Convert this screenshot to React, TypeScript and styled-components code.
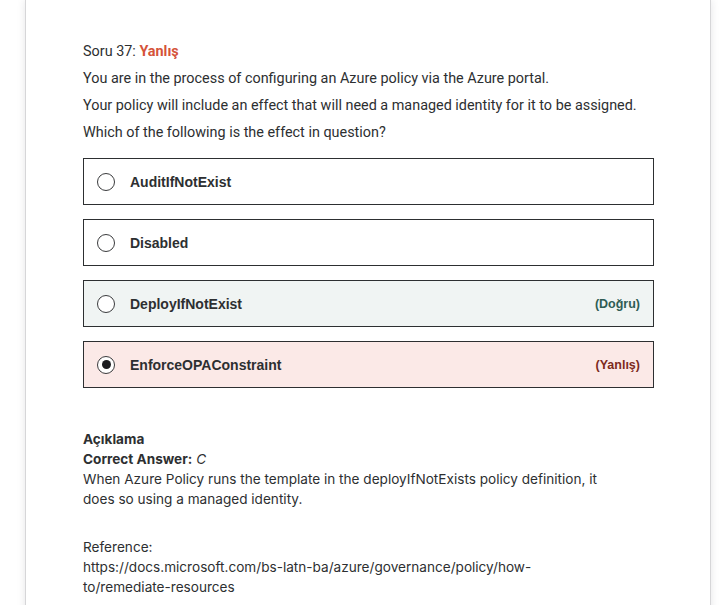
import React from "react";
import styled, { createGlobalStyle } from "styled-components";

const Global = createGlobalStyle`
  html, body { margin: 0; padding: 0; background: #ffffff; }
  body { font-family: Roboto, "Liberation Sans", sans-serif; color: #2d2f31; }
  #root { overflow: hidden; height: 605px; }
`;

const Page = styled.div`
  height: 605px;
  padding-left: 25px;
`;

const Card = styled.div`
  width: 686px;
  min-height: 640px;
  box-sizing: border-box;
  padding: 42px 57px 0;
  background: #fff;
  border-left: 1px solid #d6d6d8;
  border-right: 1px solid #d6d6d8;
  box-shadow: 0 0 8px rgba(40, 40, 60, 0.12);
`;

const Title = styled.div`
  font-size: 14.4px;
  line-height: 20px;
  font-family: Roboto, sans-serif;
`;

const Wrong = styled.span`
  color: #d5533a;
  font-weight: 700;
`;

const Para = styled.p`
  margin: 7px 0 0;
  font-size: 14.4px;
  line-height: 20px;
  font-family: Roboto, sans-serif;
`;

const Options = styled.div`
  margin-top: 15px;
  display: flex;
  flex-direction: column;
  gap: 14px;
  width: 571px;
`;

const Option = styled.div<{ $tone?: "ok" | "bad" }>`
  height: 47px;
  box-sizing: border-box;
  border: 1px solid #2d2f31;
  display: flex;
  align-items: center;
  padding: 0 13px 0 13px;
  background: ${(p) => (p.$tone === "ok" ? "#f0f4f3" : p.$tone === "bad" ? "#fbe9e7" : "#fff")};
`;

const Radio = styled.span<{ $checked?: boolean }>`
  width: 18px;
  height: 18px;
  box-sizing: border-box;
  border-radius: 50%;
  border: 1.3px solid #3a3b3d;
  background: #fff;
  display: flex;
  align-items: center;
  justify-content: center;
  flex: none;
  &::after {
    content: "";
    display: ${(p) => (p.$checked ? "block" : "none")};
    width: 9px;
    height: 9px;
    border-radius: 50%;
    background: #1c1d1f;
  }
`;

const Label = styled.span`
  margin-left: 15px;
  font-family: "Liberation Sans", Arial, sans-serif;
  font-weight: 700;
  font-size: 14px;
  flex: 1;
`;

const Tag = styled.span<{ $tone: "ok" | "bad" }>`
  font-family: "Liberation Sans", Arial, sans-serif;
  font-weight: 700;
  font-size: 12.5px;
  color: ${(p) => (p.$tone === "ok" ? "#2f5c54" : "#7d2a1d")};
`;

const Explain = styled.div`
  margin-top: 41px;
  width: 525px;
  font-family: Inter, "Liberation Sans", sans-serif;
  font-size: 13.6px;
  line-height: 20px;
`;

const Heading = styled.div`
  font-weight: 700;
`;

const Block = styled.div<{ $gap?: number }>`
  margin-top: ${(p) => p.$gap ?? 0}px;
`;

const options: { label: string; tone?: "ok" | "bad"; tag?: string; checked?: boolean }[] = [
  { label: "AuditIfNotExist" },
  { label: "Disabled" },
  { label: "DeployIfNotExist", tone: "ok", tag: "(Doğru)" },
  { label: "EnforceOPAConstraint", tone: "bad", tag: "(Yanlış)", checked: true },
];

export default function App() {
  return (
    <>
      <Global />
      <Page>
        <Card>
          <Title>
            Soru 37: <Wrong>Yanlış</Wrong>
          </Title>
          <Para>You are in the process of configuring an Azure policy via the Azure portal.</Para>
          <Para>Your policy will include an effect that will need a managed identity for it to be assigned.</Para>
          <Para>Which of the following is the effect in question?</Para>
          <Options>
            {options.map((o) => (
              <Option key={o.label} $tone={o.tone}>
                <Radio $checked={o.checked} />
                <Label>{o.label}</Label>
                {o.tag && o.tone && <Tag $tone={o.tone}>{o.tag}</Tag>}
              </Option>
            ))}
          </Options>
          <Explain>
            <Heading>Açıklama</Heading>
            <div>
              <strong>Correct Answer:</strong> <em>C</em>
            </div>
            <div>
              When Azure Policy runs the template in the deployIfNotExists policy definition, it does so using a
              managed identity.
            </div>
            <Block $gap={28}>
              Reference:
              <br />
              https://docs.microsoft.com/bs-latn-ba/azure/governance/policy/how-to/remediate-resources
            </Block>
          </Explain>
        </Card>
      </Page>
    </>
  );
}
